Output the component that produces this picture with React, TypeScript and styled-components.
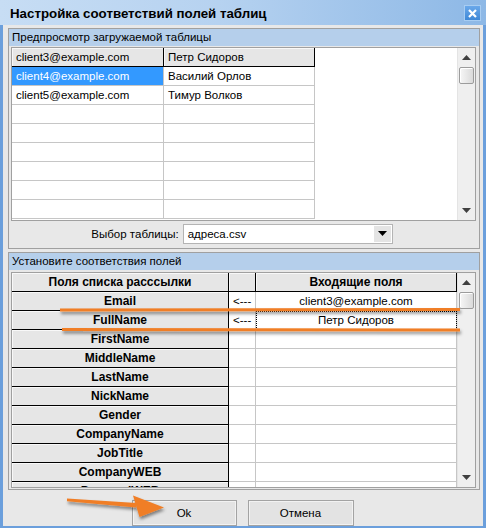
import React from "react";
import styled, { createGlobalStyle } from "styled-components";

const GlobalStyle = createGlobalStyle`
  *, *::before, *::after { box-sizing: border-box; }
  html, body { margin: 0; padding: 0; background: #ffffff; }
  body {
    font-family: "Liberation Sans", Arial, sans-serif;
    font-size: 11px;
    color: #000;
  }
`;

const Window = styled.div`
  position: relative;
  width: 486px;
  height: 528px;
  display: flex;
  flex-direction: column;
  background: #6b9fdc;
  overflow: hidden;
`;

const TitleBar = styled.div`
  height: 25px;
  flex: none;
  display: flex;
  align-items: center;
  justify-content: space-between;
  padding: 0 5px 0 10px;
  background: linear-gradient(to right, #c7ddf4 0%, #b6d2f0 45%, #8db8e6 100%);
`;

const Title = styled.div`
  font-weight: bold;
  font-size: 13.3px;
  padding-top: 1px;
`;

const CloseButton = styled.div`
  width: 17px;
  height: 16px;
  margin-top: 1px;
  display: flex;
  align-items: center;
  justify-content: center;
  background: linear-gradient(#6aa8ea, #3f88d6);
  border: 1px solid #a8cdf2;
`;

const Body = styled.div`
  flex: 1;
  display: flex;
  flex-direction: column;
  gap: 3px;
  margin: 0 3px 2px 3px;
  padding: 3px 3px 0 5px;
  background: #e8e8e8;
`;

const Group = styled.section<{ $height: number }>`
  height: ${(p) => p.$height}px;
  flex: none;
  display: flex;
  flex-direction: column;
  border: 1px solid #a0a0a0;
`;

const GroupTitle = styled.div`
  height: 17px;
  line-height: 17px;
  padding-left: 3px;
  font-size: 11.5px;
  background: #b5cfeb;
  flex: none;
`;

const GridFrame = styled.div<{ $height: number; $top: number }>`
  height: ${(p) => p.$height}px;
  margin: ${(p) => p.$top}px 3px 0 2px;
  flex: none;
  display: flex;
  border: 1px solid #a0a0a0;
  background: #fff;
  overflow: hidden;
`;

const Table = styled.div<{ $cols: string }>`
  flex: 1;
  display: grid;
  grid-template-columns: ${(p) => p.$cols};
  grid-auto-rows: 19px;
  align-content: start;
`;

const HeadCell = styled.div<{ $bold?: boolean; $center?: boolean }>`
  background: #e6e6e6;
  border-right: 1px solid #000;
  border-bottom: 1px solid #000;
  box-shadow: inset 1px 1px 0 #f8f8f8;
  line-height: 18px;
  padding-left: ${(p) => (p.$center ? 0 : 4)}px;
  text-align: ${(p) => (p.$center ? "center" : "left")};
  font-weight: ${(p) => (p.$bold ? "bold" : "normal")};
  font-size: ${(p) => (p.$bold ? 12 : 11.5)}px;
  white-space: nowrap;
  overflow: hidden;
`;

const Cell = styled.div<{ $selected?: boolean; $center?: boolean; $focus?: boolean }>`
  background: ${(p) => (p.$selected ? "#3399ff" : "#fff")};
  color: ${(p) => (p.$selected ? "#fff" : "#000")};
  border-right: 1px solid #c6c6c6;
  border-bottom: 1px solid #c6c6c6;
  line-height: 18px;
  font-size: 11.5px;
  padding-left: ${(p) => (p.$center ? 0 : 4)}px;
  text-align: ${(p) => (p.$center ? "center" : "left")};
  white-space: nowrap;
  overflow: hidden;
  outline: ${(p) => (p.$focus ? "1px dotted #000" : "none")};
  outline-offset: -1px;
`;

const Blank = styled.div``;

const ScrollBar = styled.div`
  width: 18px;
  flex: none;
  display: flex;
  flex-direction: column;
  align-items: center;
  background: #efefef;
  border-left: 1px solid #e4e4e4;
`;

const ScrollArrow = styled.div`
  height: 19px;
  width: 100%;
  display: flex;
  align-items: center;
  justify-content: center;
  flex: none;
`;

const Thumb = styled.div`
  width: 15px;
  height: 17px;
  flex: none;
  border: 1px solid #9c9c9c;
  border-radius: 2px;
  background: linear-gradient(to right, #f6f6f6, #dadada);
  box-shadow: inset 1px 1px 0 #fff;
`;

const Spacer = styled.div`
  flex: 1;
`;

const ComboRow = styled.div`
  flex: 1;
  display: flex;
  align-items: center;
  justify-content: center;
  gap: 4px;
  padding-bottom: 2px;
  padding-right: 4px;
  font-size: 11.5px;
`;

const Combo = styled.div`
  width: 210px;
  height: 20px;
  display: flex;
  align-items: center;
  justify-content: space-between;
  background: #fff;
  border: 1px solid #b4b4b4;
  padding-left: 4px;
`;

const ComboButton = styled.div`
  width: 17px;
  height: 16px;
  margin-right: 1px;
  display: flex;
  align-items: center;
  justify-content: center;
  background: #e4e4e4;
`;

const ButtonRow = styled.div`
  display: flex;
  justify-content: center;
  gap: 11px;
  padding-top: 7px;
  padding-right: 3px;
`;

const Button = styled.button<{ $width: number }>`
  width: ${(p) => p.$width}px;
  height: 26px;
  font-family: inherit;
  font-size: 11.5px;
  color: #000;
  background: #e3e3e3;
  border: 1px solid #a3a3a3;
  box-shadow: inset 0 0 0 1px #f2f2f2;
  padding: 0;
`;

const Overlay = styled.svg`
  position: absolute;
  left: 0;
  top: 0;
  pointer-events: none;
`;

const Arrow = ({ dir }: { dir: "up" | "down" }) => (
  <svg width="9" height="5" viewBox="0 0 9 5">
    <polygon
      points={dir === "up" ? "4.5,0 9,5 0,5" : "0,0 9,0 4.5,5"}
      fill="#404040"
    />
  </svg>
);

const VScroll = ({ thumbTop = 0 }: { thumbTop?: number }) => (
  <ScrollBar>
    <ScrollArrow>
      <Arrow dir="up" />
    </ScrollArrow>
    <Thumb style={{ marginTop: thumbTop }} />
    <Spacer />
    <ScrollArrow>
      <Arrow dir="down" />
    </ScrollArrow>
  </ScrollBar>
);

const previewRows = [
  ["client4@example.com", "Василий Орлов"],
  ["client5@example.com", "Тимур Волков"],
  ["", ""],
  ["", ""],
  ["", ""],
  ["", ""],
  ["", ""],
  ["", ""],
];

const fields = [
  "Email",
  "FullName",
  "FirstName",
  "MiddleName",
  "LastName",
  "NickName",
  "Gender",
  "CompanyName",
  "JobTitle",
  "CompanyWEB",
  "PersonalWEB",
];

const mapped: Record<string, string> = {
  Email: "client3@example.com",
  FullName: "Петр Сидоров",
};

export default function App() {
  return (
    <Window>
      <GlobalStyle />
      <TitleBar>
        <Title>Настройка соответствий полей таблиц</Title>
        <CloseButton>
          <svg width="9" height="9" viewBox="0 0 9 9">
            <path d="M1 1 L8 8 M8 1 L1 8" stroke="#fff" strokeWidth="2.2" />
          </svg>
        </CloseButton>
      </TitleBar>

      <Body>
        <Group $height={221}>
          <GroupTitle>Предпросмотр загружаемой таблицы</GroupTitle>
          <GridFrame $height={174} $top={1}>
            <Table $cols="152px 151px 1fr">
              <HeadCell>client3@example.com</HeadCell>
              <HeadCell>Петр Сидоров</HeadCell>
              <Blank />
              {previewRows.map((r, i) => (
                <React.Fragment key={i}>
                  <Cell $selected={i === 0}>{r[0]}</Cell>
                  <Cell>{r[1]}</Cell>
                  <Blank />
                </React.Fragment>
              ))}
            </Table>
            <VScroll />
          </GridFrame>
          <ComboRow>
            <span>Выбор таблицы:</span>
            <Combo>
              <span>адреса.csv</span>
              <ComboButton>
                <svg width="9" height="5" viewBox="0 0 9 5">
                  <polygon points="0,0 9,0 4.5,5" fill="#000" />
                </svg>
              </ComboButton>
            </Combo>
          </ComboRow>
        </Group>

        <Group $height={238}>
          <GroupTitle>Установите соответствия полей</GroupTitle>
          <GridFrame $height={216} $top={2}>
            <Table $cols="217px 27px 201px">
              <HeadCell $bold $center>
                Поля списка расссылки
              </HeadCell>
              <HeadCell />
              <HeadCell $bold $center>
                Входящие поля
              </HeadCell>
              {fields.map((f) => (
                <React.Fragment key={f}>
                  <HeadCell $bold $center>
                    {f}
                  </HeadCell>
                  <Cell>{mapped[f] ? "<---" : ""}</Cell>
                  <Cell $center $focus={f === "FullName"}>
                    {mapped[f] ?? ""}
                  </Cell>
                </React.Fragment>
              ))}
            </Table>
            <VScroll />
          </GridFrame>
        </Group>

        <ButtonRow>
          <Button $width={105}>Ok</Button>
          <Button $width={106}>Отмена</Button>
        </ButtonRow>
      </Body>

      <Overlay width="486" height="528" viewBox="0 0 486 528">
        <defs>
          <filter id="shade" x="-10%" y="-50%" width="120%" height="300%">
            <feDropShadow dx="1" dy="2.5" stdDeviation="1.6" floodColor="#000" floodOpacity="0.45" />
          </filter>
        </defs>
        <g filter="url(#shade)" fill="#f07e26">
          <polygon points="60,308.5 460,308 460,311 60,311.5" />
          <polygon points="62,328 460,328.5 460,331.5 62,331" />
          <polygon points="67,498.6 136.4,503 135.8,507.4 67,501.2" />
          <polygon points="133,495.5 164,507.5 139.5,517" />
        </g>
      </Overlay>
    </Window>
  );
}
